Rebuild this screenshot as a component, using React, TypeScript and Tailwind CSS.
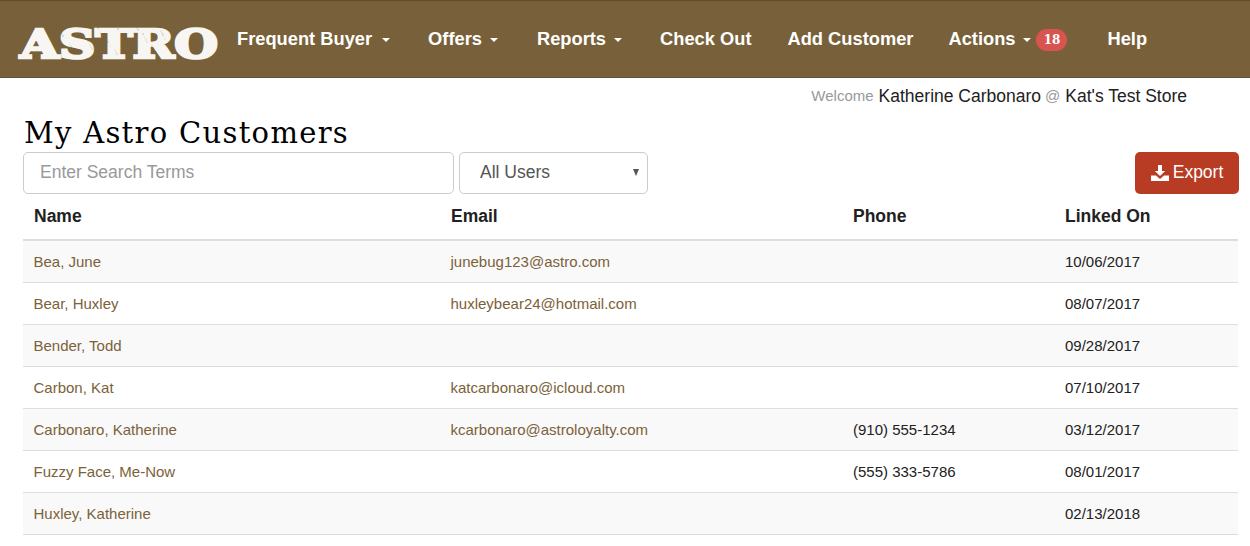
const rows = [
  ["Bea, June", "junebug123@astro.com", "", "10/06/2017"],
  ["Bear, Huxley", "huxleybear24@hotmail.com", "", "08/07/2017"],
  ["Bender, Todd", "", "", "09/28/2017"],
  ["Carbon, Kat", "katcarbonaro@icloud.com", "", "07/10/2017"],
  ["Carbonaro, Katherine", "kcarbonaro@astroloyalty.com", "(910) 555-1234", "03/12/2017"],
  ["Fuzzy Face, Me-Now", "", "(555) 333-5786", "08/01/2017"],
  ["Huxley, Katherine", "", "", "02/13/2018"],
];

const specks = Array.from({ length: 70 }, (_, i) => ({
  x: 42 + ((i * 37) % 120),
  y: 11 + ((i * 23) % 27),
  r: 0.3 + ((i * 7) % 5) * 0.1,
}));

function Caret({ wide }: { wide?: boolean }) {
  return <span className={`${wide ? "ml-[10px]" : "ml-[8px]"} inline-block h-0 w-0 border-x-[4px] border-t-[4px] border-x-transparent border-t-white align-middle`} />;
}

function NavItem({ label, caret, wide }: { label: string; caret?: boolean; wide?: boolean }) {
  return (
    <a className="whitespace-nowrap text-[18.3px] font-bold leading-[20px] text-white">
      {label}
      {caret && <Caret wide={wide} />}
    </a>
  );
}

function Logo() {
  return (
    <svg width="202" height="52" viewBox="0 0 202 52" className="-my-[6px] block">
      <text
        x="3"
        y="41"
        textLength="198"
        lengthAdjust="spacingAndGlyphs"
        fontFamily="'DejaVu Serif', serif"
        fontWeight="700"
        fontSize="40"
        fill="#f8f6f2"
        stroke="#f8f6f2"
        strokeWidth="2.6"
      >
        ASTRO
      </text>
      {specks.map((s, i) => (
        <circle key={i} cx={s.x} cy={s.y} r={s.r} fill="#78613a" opacity="0.5" />
      ))}
    </svg>
  );
}

export default function App() {
  return (
    <div className="h-[546px] overflow-hidden bg-white font-['Liberation_Sans',Arial,sans-serif] text-[15px] text-[#212121]">
      <nav className="flex h-[78px] items-center border-t border-b border-t-[#5f4d2e] border-b-[#66532f] bg-[#78613a] pl-[17px]">
        <div className="w-[220px] shrink-0 pt-[7px]"><Logo /></div>
        <div className="flex items-center">
          <div className="mr-[38px] pt-[2px]"><NavItem label="Frequent Buyer" caret wide /></div>
          <div className="mr-[39px] pt-[2px]"><NavItem label="Offers" caret /></div>
          <div className="mr-[38px] pt-[2px]"><NavItem label="Reports" caret /></div>
          <div className="mr-[36px] pt-[2px]"><NavItem label="Check Out" /></div>
          <div className="mr-[35px] pt-[2px]"><NavItem label="Add Customer" /></div>
          <div className="mr-[40px] flex items-center">
            <NavItem label="Actions" caret />
            <span className="ml-[5px] mt-[2px] flex h-[22px] w-[31px] items-center justify-center rounded-[11px] bg-[#d9534f] font-['DejaVu_Serif',serif] text-[12px] font-bold text-white">18</span>
          </div>
          <div className="pt-[2px]"><NavItem label="Help" /></div>
        </div>
      </nav>

      <div className="flex h-[37px] items-center justify-end pr-[63px]">
        <span className="text-[15px] text-[#999]">Welcome</span>
        <span className="ml-[5px] text-[17.5px] text-[#212121]">Katherine Carbonaro</span>
        <span className="ml-[4px] text-[15px] text-[#999]">@</span>
        <span className="ml-[5px] text-[17.5px] text-[#212121]">Kat's Test Store</span>
      </div>

      <div className="pl-[23px] pr-[11px]">
        <h1 className="h-[37px] whitespace-nowrap pl-[1px] pt-[1px] font-['DejaVu_Serif',serif] text-[29px] font-normal leading-[34px] tracking-[1.3px] text-black">
          My Astro Customers
        </h1>

        <div className="flex h-[42px] items-stretch">
          <div className="flex w-[431px] items-center rounded-[5px] border border-[#ccc] bg-white pb-[1px] pl-[16px] text-[17.5px] text-[#999]">
            Enter Search Terms
          </div>
          <div className="ml-[5px] flex w-[189px] items-center justify-between rounded-[5px] border border-[#ccc] bg-white pb-[1px] pl-[20px] pr-[8px] text-[17.5px] text-[#555]">
            All Users
            <span className="h-0 w-0 border-x-[3.5px] border-t-[7px] border-x-transparent border-t-[#555]" />
          </div>
          <button className="ml-auto flex w-[104px] items-center justify-center gap-[4px] rounded-[5px] bg-[#b73c23] pb-[1px] text-[17.5px] text-white">
            <svg width="18" height="16" viewBox="0 0 18 16" fill="white">
              <path d="M7 0h4v6h3.2L9 11 3.8 6H7z" />
              <path d="M0 10.5h5L9 14l4-3.5h5V16H0z" />
            </svg>
            Export
          </button>
        </div>

        <div className="w-[1215px]">
          <div className="grid h-[47px] grid-cols-[418px_402px_212px_183px] items-center border-b-2 border-[#ddd] text-[17.5px] font-bold text-[#212121]">
            <div className="pl-[11px]">Name</div>
            <div className="pl-[10px]">Email</div>
            <div className="pl-[10px]">Phone</div>
            <div className="pl-[10px]">Linked On</div>
          </div>
          {rows.map((r, i) => (
            <div
              key={r[0]}
              className={`grid h-[42px] grid-cols-[418px_402px_212px_183px] items-center border-b border-[#ddd] pt-[2px] ${i % 2 === 0 ? "bg-[#f9f9f9]" : "bg-white"}`}
            >
              <div className="pl-[10.5px] text-[#7b6239]">{r[0]}</div>
              <div className="pl-[9.5px] text-[#7b6239]">{r[1]}</div>
              <div className="pl-[10px]">{r[2]}</div>
              <div className="pl-[10px]">{r[3]}</div>
            </div>
          ))}
        </div>
      </div>
    </div>
  );
}
